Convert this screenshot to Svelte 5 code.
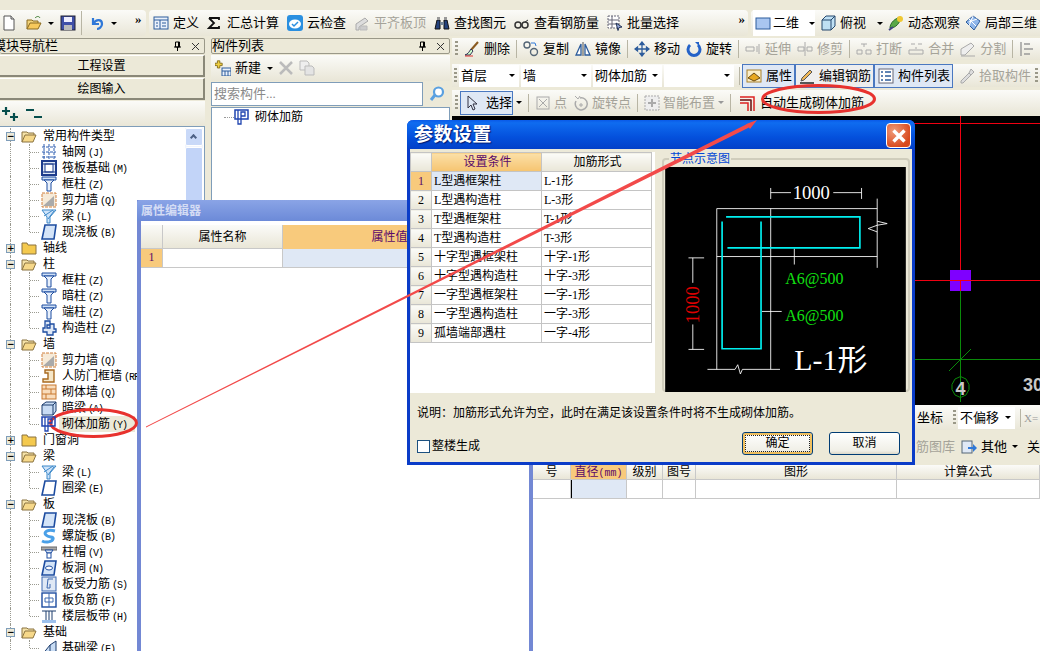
<script>
  const icons = {
    doc: '<path d="M3 1h7l3 3v11H3z" fill="#fff" stroke="#555"/><path d="M10 1v3h3" fill="#ddd" stroke="#555"/>',
    open: '<path d="M1 14V5h5l1 1h5v2" fill="#f2d37a" stroke="#8a6a20"/><path d="M1 14l3-6h11l-3 6z" fill="#f7c95c" stroke="#8a6a20"/><path d="M9 3c2-2 4-2 5 0" fill="none" stroke="#3a7a30"/>',
    save: '<rect x="1" y="1" width="14" height="14" fill="#3f4fa8" stroke="#223"/><rect x="4" y="2" width="8" height="5" fill="#eef"/><rect x="4" y="10" width="8" height="5" fill="#bbb"/>',
    undo: '<path d="M4 3v6h6M4.500 8.500C7 4 13 4 13 9c0 3-3 5-5 5" fill="none" stroke="#2f78d8" stroke-width="2.200"/>',
    define: '<rect x="1" y="2" width="14" height="12" fill="#eaf1fb" stroke="#2d5c9c"/><path d="M1 5h14M7 5v9M9 8h4M9 11h4M3 8h2M3 11h2" stroke="#2d5c9c"/>',
    sigma: '<path d="M2 3h10v2M12 13H2l5-5-5-5M2 13h10v-2" fill="none" stroke="#111" stroke-width="1.800"/>',
    cloud: '<rect x="0" y="0" width="16" height="16" rx="3" fill="#2a8fe0"/><ellipse cx="8" cy="9" rx="6" ry="4.500" fill="#fff"/><path d="M5 9l2 2 4-4" fill="none" stroke="#2a8fe0" stroke-width="1.500"/>',
    flat: '<path d="M2 9l9-6 3 3-9 6v3H2z" fill="#ddd" stroke="#aaa"/><path d="M6 11h7v4H6z" fill="#ccc" stroke="#bbb"/>',
    binoc: '<path d="M1 14l2-9h3v9zM10 14V5h3l2 9z" fill="#24427c" stroke="#111"/><path d="M6 7h4v3H6z" fill="#789"/><rect x="3" y="2" width="3" height="3" fill="#999"/><rect x="10" y="2" width="3" height="3" fill="#999"/>',
    glass: '<circle cx="4" cy="10" r="3" fill="none" stroke="#333" stroke-width="1.500"/><circle cx="11" cy="10" r="3" fill="none" stroke="#333" stroke-width="1.500"/><path d="M7 10h1M11 7l3-2" stroke="#333"/>',
    batch: '<rect x="1" y="1" width="11" height="12" fill="#fff" stroke="#667" stroke-dasharray="2 1"/><path d="M1 5h11M1 9h11M5 1v12" stroke="#667"/><path d="M9 8l6 4-3 .5-1 3z" fill="#9ad" stroke="#235"/>',
    view2d: '<rect x="1" y="3" width="14" height="11" fill="#a9c6f0" stroke="#2d5c9c"/>',
    box: '<path d="M2 5l4-4h9v10l-4 4H2z" fill="#bfe0f4" stroke="#24466c"/><path d="M2 5h9v10M11 5l4-4" fill="none" stroke="#24466c"/>',
    orbit: '<path d="M2 13c0-5 5-10 11-11-1 6-5 11-11 11z" fill="#5aa848" stroke="#2b6a28"/><circle cx="12" cy="4" r="3" fill="#f0c832"/><path d="M1 15l4-3" stroke="#448" stroke-width="2"/>',
    part3d: '<path d="M1 7l7-6 7 5-6 9z" fill="#8fb6ea" stroke="#2d5c9c"/><path d="M4 4l7 7M8 1l-4 10M12 4l-8 3" stroke="#fff"/>',
    broom: '<path d="M14 1L7 9" stroke="#8a5a20" stroke-width="2"/><path d="M7 8l2 2-3 4H1c3-1 4-3 6-6z" fill="#cfc" stroke="#335"/><path d="M1 15h8" stroke="#d33"/>',
    copy: '<circle cx="4" cy="4" r="3" fill="none" stroke="#567" stroke-width="1.400"/><circle cx="11" cy="11" r="3.500" fill="none" stroke="#567" stroke-width="1.400"/><path d="M8 2h4l1 3" fill="none" stroke="#2f78d8"/>',
    mirror: '<path d="M8 1v14" stroke="#555"/><path d="M6 3v11H1zM10 3v11h5z" fill="#fff" stroke="#2d5c9c" stroke-width="1.300"/>',
    move: '<path d="M8 1v14M1 8h14M8 1L6 3.500h4zM8 15l-2-2.500h4zM1 8l2.500-2v4zM15 8l-2.500-2v4z" fill="#2d5c9c" stroke="#2d5c9c" stroke-width="1.300"/>',
    rotate: '<path d="M4 4a6 6 0 1 0 8 0" fill="none" stroke="#2462c8" stroke-width="3"/><path d="M9 1h4v4z" fill="#2462c8"/>',
    extend: '<path d="M1 6h8v4H1zM12 5v6M14 3v10" fill="none" stroke="#aaa"/>',
    trim: '<path d="M1 6h6v4H1zM10 6h5v4h-5zM8 1v14" fill="none" stroke="#aaa"/>',
    brk: '<path d="M1 9h5v4H1zM10 9h5v4h-5zM5 3h6M8 3v3" fill="none" stroke="#aaa"/>',
    merge: '<path d="M1 9h14v4H1zM3 3h4M10 3h4M8 6v2" fill="none" stroke="#aaa"/>',
    split: '<path d="M1 14V8l10-6 3 3-9 9z" fill="#eee" stroke="#aaa"/><path d="M1 15h14" stroke="#aaa"/>',
    leftbar: '<path d="M2 1v14M5 3h6M5 8h9M5 13h6" fill="none" stroke="#999" stroke-width="1.400"/>',
    attr: '<rect x="1" y="2" width="14" height="12" fill="#fbeec8" stroke="#a8802c"/><path d="M2 10l6-5 6 5-6 3z" fill="#e8a820" stroke="#6a4a10"/>',
    pencil: '<path d="M3 10l8-8 2 2-8 8-3 1z" fill="#f0b858" stroke="#555"/><path d="M1 15h14" stroke="#222" stroke-width="1.500"/>',
    list: '<rect x="1" y="1" width="14" height="14" fill="#fff" stroke="#667"/><path d="M3 4h2M3 8h2M3 12h2M7 4h6M7 8h6M7 12h6" stroke="#2d5c9c" stroke-width="1.500"/>',
    pick: '<path d="M12 1l3 3-3 3-2-2zM10 5L2 13v2h2l8-8" fill="#ddd" stroke="#aaa"/>',
    arrow: '<path d="M4 1v12l3-3 2 5 2-1-2-5h4z" fill="#dfe8f5" stroke="#334"/>',
    point: '<rect x="2" y="2" width="12" height="12" fill="none" stroke="#aaa"/><path d="M4 4l8 8M12 4l-8 8" stroke="#aaa"/>',
    rotpt: '<path d="M3 6a6 6 0 1 0 4-3" fill="none" stroke="#aaa" stroke-width="1.500"/><path d="M8 8v4M6 10h4M2 1l3 3 2-3" stroke="#aaa" fill="none"/>',
    smart: '<rect x="1" y="1" width="14" height="14" fill="#eee" stroke="#aaa" stroke-dasharray="2 1"/><path d="M8 4v8M4 8h8" stroke="#aaa" stroke-width="2"/>',
    auto: '<path d="M1 2h14v14M1 5h11v11M1 8h8v8" fill="none" stroke="#d22" stroke-width="1.500"/><path d="M1 5h11v11" fill="none" stroke="#333"/>',
    other: '<rect x="1" y="2" width="10" height="12" fill="#dfe8f5" stroke="#567"/><path d="M7 8h5V5l4 4-4 4v-3H7z" fill="#2f78d8"/>',
    newitem: '<path d="M3 1h3v3h3v3H6v3H3V7H0V4h3z" fill="#f0d040" stroke="#776010" transform="scale(.8)"/><rect x="7" y="8" width="9" height="8" fill="#eaf1fb" stroke="#2d5c9c"/><path d="M7 11h9M10 11v5M13 11v5" stroke="#2d5c9c"/>',
    del: '<path d="M2 2l12 12M14 2L2 14" stroke="#bbb" stroke-width="2.500"/>',
    dup: '<path d="M1 1h7l2 2v7H1z" fill="#eee" stroke="#bbb"/><path d="M6 6h7l2 2v7H6z" fill="#e4e4e4" stroke="#bbb"/>',
    search: '<circle cx="9.500" cy="6" r="4.500" fill="#fff" stroke="#5aa0e0" stroke-width="2.200"/><path d="M6 9l-4 5" stroke="#5aa0e0" stroke-width="3"/>',
    rebar: '<rect x="1" y="1" width="13" height="9" fill="none" stroke="#1f44b0" stroke-width="1.500"/><path d="M4 1v14h3V7M11 3h-4v4h4z" fill="none" stroke="#1f44b0" stroke-width="1.300"/>',
    grid: '<path d="M1 3h14M1 8h14M1 13h14M3 0v16M8 0v16M13 0v16" stroke="#2d5cb0" stroke-dasharray="3 1"/>',
    raft: '<rect x="1" y="1" width="14" height="14" fill="#dfe8f5" stroke="#1d3c8c" stroke-width="2"/><rect x="4" y="4" width="8" height="8" fill="#fff" stroke="#1d3c8c"/><path d="M1 4h14M1 12h14" stroke="#1d3c8c"/>',
    col: '<path d="M1 1h14v3H1z" fill="#cfe0f6" stroke="#1d4ca0"/><path d="M3 4l3 3v8h4V7l3-3z" fill="#e8f0fb" stroke="#1d4ca0"/>',
    shear: '<rect x="1" y="1" width="14" height="14" fill="#f6ead8" stroke="#d08040" stroke-dasharray="3 1"/><path d="M2 14L13 4v10z" fill="#aaa"/>',
    beam: '<path d="M1 2h14L9 9v6H6V9z" fill="#cfe4fa" stroke="#3c88c8"/><path d="M3 8l9-6M7 11l6-8" stroke="#3c88c8"/>',
    slab: '<path d="M4 1h11l-2 14H1z" fill="#d4e4f8" stroke="#1d4ca0" stroke-width="1.600"/>',
    slab2: '<path d="M4 1h11l-2 14H1z" fill="#fff" stroke="#1d4ca0" stroke-width="1.600"/>',
    gz: '<path d="M4 1h5v3h4v5h2v3h-3v3H6v-3H2V8h2zM6 5h3v3H6z" fill="#dfe8f5" stroke="#1d4ca0" stroke-width="1.300"/>',
    door: '<path d="M4 2h9v12H2v-3h5V5H4z" fill="#f5e6c8" stroke="#a86a20" stroke-width="1.400"/>',
    brick: '<rect x="1" y="1" width="14" height="14" fill="#f8dcbc" stroke="#c87830"/><path d="M1 5h14M1 10h14M5 1v4M10 5v5M5 10v5" stroke="#c87830"/>',
    dbeam: '<path d="M1 5l4-3h10v9l-3 4H1z" fill="#c8dcf4" stroke="#1d3c6c"/><path d="M1 5h11v10M12 5l3-3" fill="none" stroke="#1d3c6c"/>',
    spiral: '<path d="M14 3C7 1 2 4 5 7s8 1 7 4-7 4-11 2" fill="none" stroke="#4aa0e8" stroke-width="3"/>',
    cap: '<path d="M0 3h16v3H0z" fill="#aaa" stroke="#666"/><path d="M4 6h8l-2 3H6z" fill="#dfe8f5" stroke="#1d4ca0"/><rect x="6" y="9" width="4" height="5" fill="#fff" stroke="#1d4ca0"/>',
    hole: '<path d="M4 1h11l-2 14H1z" fill="#d4e4f8" stroke="#1d4ca0" stroke-width="1.600"/><ellipse cx="8" cy="8" rx="3.500" ry="2" fill="#fff" stroke="#1d4ca0"/>',
    sbar: '<rect x="1" y="1" width="14" height="14" fill="#dfe8f5" stroke="#3c68b0"/><path d="M12 3H7l-1 9h3V8" fill="none" stroke="#3c68b0"/>',
    neg: '<rect x="1" y="1" width="14" height="14" fill="#fff" stroke="#1d4ca0" stroke-width="1.400"/><path d="M8 1v14M4 6v4h8V6z" fill="none" stroke="#3c68b0"/>',
    band: '<path d="M1 3h14M1 14h14M5 3v11M8 3v11M11 3v11" stroke="#1d3c6c"/><path d="M1 12h14v3H1z" fill="#9cc0ec"/>',
    fbeam: '<path d="M1 15L9 5l6-4v10l-6 4z" fill="#c8dcf4" stroke="#1d3c6c"/><path d="M9 5v10" stroke="#1d3c6c"/>'
  }

  const topA = [
    ['define', '定义'], ['sigma', '汇总计算'], ['cloud', '云检查'], ['flat', '平齐板顶', true],
    ['binoc', '查找图元'], ['glass', '查看钢筋量'], ['batch', '批量选择']
  ]
  const editRow = [
    ['broom', '删除'], 0, ['copy', '复制'], ['mirror', '镜像'], 0, ['move', '移动'], ['rotate', '旋转'], 0,
    ['extend', '延伸', true], ['trim', '修剪', true], 0, ['brk', '打断', true], ['merge', '合并', true], ['split', '分割', true], 0,
    ['leftbar', '', true]
  ]
  const tree = [
    { name: '常用构件类型', open: true, kids: [['grid', '轴网', 'J'], ['raft', '筏板基础', 'M'], ['col', '框柱', 'Z'], ['shear', '剪力墙', 'Q'], ['beam', '梁', 'L'], ['slab', '现浇板', 'B']] },
    { name: '轴线' },
    { name: '柱', open: true, kids: [['col', '框柱', 'Z'], ['col', '暗柱', 'Z'], ['col', '端柱', 'Z'], ['gz', '构造柱', 'Z']] },
    { name: '墙', open: true, kids: [['shear', '剪力墙', 'Q'], ['door', '人防门框墙', 'RF'], ['brick', '砌体墙', 'Q'], ['dbeam', '暗梁', 'A'], ['rebar', '砌体加筋', 'Y', true]] },
    { name: '门窗洞' },
    { name: '梁', open: true, kids: [['beam', '梁', 'L'], ['slab2', '圈梁', 'E']] },
    { name: '板', open: true, kids: [['slab', '现浇板', 'B'], ['spiral', '螺旋板', 'B'], ['cap', '柱帽', 'V'], ['hole', '板洞', 'N'], ['sbar', '板受力筋', 'S'], ['neg', '板负筋', 'F'], ['band', '楼层板带', 'H']] },
    { name: '基础', open: true, kids: [['fbeam', '基础梁', 'F']] }
  ]
  const params = [
    ['L型遇框架柱', 'L-1形'], ['L型遇构造柱', 'L-3形'], ['T型遇框架柱', 'T-1形'], ['T型遇构造柱', 'T-3形'],
    ['十字型遇框架柱', '十字-1形'], ['十字型遇构造柱', '十字-3形'], ['一字型遇框架柱', '一字-1形'], ['一字型遇构造柱', '一字-3形'], ['孤墙端部遇柱', '一字-4形']
  ]
</script>

{#snippet ic(name)}
  <svg class="ic" viewBox="0 0 16 16">{@html icons[name]}</svg>
{/snippet}

{#snippet tool(item)}
  <span class="tool" class:off={item[2]}>{@render ic(item[0])}{#if item[1]}<span>{item[1]}</span>{/if}</span>
{/snippet}

{#snippet combo(text, width)}
  <span class="combo" style="width:{width}px"><span>{text}</span><i class="caret"></i></span>
{/snippet}

{#snippet paneBtns()}
  <svg class="pin" viewBox="0 0 9 10"><path d="M2.500 1h4v5h-4zM1 6h7M4.500 6v4M5.500 1v5" fill="none" stroke="#000"/></svg>
  <svg class="x" viewBox="0 0 9 9"><path d="M1 1l7 7M8 1l-7 7" stroke="#333"/></svg>
{/snippet}

<div class="screen">
  <div class="topbar">
    <div class="seg seg-a">
      {@render ic('doc')}
      <span class="ico-gap"></span>
      {@render ic('open')}<i class="caret"></i>
      {@render ic('save')}
      <i class="vsep"></i>
      {@render ic('undo')}<i class="caret"></i>
      <span class="more">»</span>
    </div>
    <div class="seg seg-b">
      {#each topA as item}{@render tool(item)}{/each}
      <span class="more push">»</span>
    </div>
    <div class="seg seg-c">
      <span class="white-btn">{@render ic('view2d')}<span>二维</span><i class="caret"></i></span>
      <span class="tool">{@render ic('box')}<span>俯视</span><i class="caret"></i></span>
      <span class="tool">{@render ic('orbit')}<span>动态观察</span></span>
      <span class="tool">{@render ic('part3d')}<span>局部三维</span></span>
    </div>
  </div>

  <div class="work">
    <aside class="nav">
      <header class="pane-head"><span class="cut">模块导航栏</span>{@render paneBtns()}</header>
      <button class="nav-btn">工程设置</button>
      <button class="nav-btn">绘图输入</button>
      <div class="expand">
        <svg width="42" height="18" viewBox="0 0 42 18"><path d="M5 2v8M1 6h8M13 8v8M9 12h8M25 5h8M33 12h8" stroke="#064e4c" stroke-width="2.200" fill="none"/></svg>
      </div>
      <div class="tree">
        <div class="scroll"><span class="up"></span><span class="thumb"></span></div>
        {#each tree as g}
          <div class="row group">
            <i class="box">{g.open ? '−' : '+'}</i>
            {#if g.open}
              <svg class="folder" viewBox="0 0 16 13"><path d="M1 12V2h5l1 1h6v2" fill="#f5e2a8" stroke="#8a7340"/><path d="M1 12l3-7h11l-3 7z" fill="#f6d88a" stroke="#8a7340"/></svg>
            {:else}
              <svg class="folder" viewBox="0 0 16 13"><path d="M1 12V1h5l1 2h8v9z" fill="#f4c94e" stroke="#8a7340"/></svg>
            {/if}
            <span class="label">{g.name}</span>
          </div>
          {#each g.kids ?? [] as k, i}
            <div class="row kid" class:last={i === g.kids.length - 1}>
              <span class="kid-ic">{@render ic(k[0])}</span>
              <span class="label" class:picked={k[3]}>{k[1]} <span class="key">({k[2]}{k[2] === 'RF' ? '' : ')'}</span></span>
            </div>
          {/each}
        {/each}
      </div>
    </aside>

    <section class="list">
      <header class="pane-head"><span>构件列表</span>{@render paneBtns()}</header>
      <div class="list-bar">
        <span class="tool">{@render ic('newitem')}<span>新建</span><i class="caret"></i></span>
        {@render ic('del')}
        {@render ic('dup')}
      </div>
      <div class="search"><span class="input">搜索构件...</span><span class="go">{@render ic('search')}</span></div>
      <div class="list-body">
        <div class="list-item"><i class="dots"></i>{@render ic('rebar')}<span>砌体加筋</span></div>
      </div>
    </section>

    <main class="right">
      <div class="bar bar-edit">
        <i class="grip"></i>
        {#each editRow as item}
          {#if item}{@render tool(item)}{:else}<i class="vsep"></i>{/if}
        {/each}
      </div>
      <div class="bar bar-combo">
        <i class="grip"></i>
        {@render combo('首层', 60)}
        {@render combo('墙', 70)}
        {@render combo('砌体加筋', 69)}
        {@render combo('', 70)}
        <i class="vsep"></i>
        <span class="toggle t1">{@render ic('attr')}<span>属性</span></span>
        <span class="toggle t2">{@render ic('pencil')}<span>编辑钢筋</span></span>
        <span class="toggle t3">{@render ic('list')}<span>构件列表</span></span>
        <span class="tool off pickup">{@render ic('pick')}<span>拾取构件</span></span>
        <i class="grip end"></i>
      </div>
      <div class="bar bar-draw">
        <i class="grip"></i>
        <span class="toggle sel">{@render ic('arrow')}<span>选择</span></span><i class="caret"></i>
        <i class="vsep"></i>
        <span class="tool off">{@render ic('point')}<span>点</span></span>
        <span class="tool off">{@render ic('rotpt')}<span>旋转点</span></span>
        <i class="vsep"></i>
        <span class="tool off">{@render ic('smart')}<span>智能布置</span><i class="caret soft"></i></span>
        <i class="vsep"></i>
        <span class="tool gen">{@render ic('auto')}<span>自动生成砌体加筋</span></span>
      </div>

      <div class="canvas">
        <svg viewBox="0 0 588 289" width="588" height="289">
          <path d="M0 7.500H588M508.500 0V164.500M0 164.500H588" stroke="#f00012" fill="none"/>
          <path d="M508.500 164V286M452 243.500H588M497 255l22-22" stroke="#0a8a0a" fill="none"/>
          <rect x="498" y="154" width="21" height="21" fill="#7f00ff"/>
          <path d="M508.500 164V175M498 164.500h21" stroke="#f00012" fill="none"/>
          <path d="M503 263l5.500-2.500 5.500 2.500 3 5.500v5l-3 5.500-5.500 2.500-5.500-2.500-3-5.500v-5z" fill="none" stroke="#0a8a0a"/>
          <text x="508.500" y="279" text-anchor="middle" class="cad-num">4</text>
          <text x="571" y="275" class="cad-num">30</text>
        </svg>
      </div>

      <div class="bar bar-coord">
        <span class="lab">坐标</span>
        <i class="grip"></i>
        {@render combo('不偏移', 57)}
        <i class="vsep"></i>
        <span class="xeq">X=</span><span class="xbox"></span>
      </div>
      <div class="bar bar-lib">
        <span class="off-txt">筋图库</span>
        <span class="tool">{@render ic('other')}<span>其他</span><i class="caret"></i></span>
        <span class="tool"><span>关闭</span></span>
      </div>
      <div class="steel">
        <div class="steel-row head">
          <span>号</span><span class="on">直径<small>(mm)</small></span><span>级别</span><span>图号</span><span>图形</span><span>计算公式</span>
        </div>
        <div class="steel-row"><span></span><span class="cur"></span><span></span><span></span><span></span><span></span></div>
      </div>
    </main>
  </div>

  <div class="win editor">
    <div class="win-title">属性编辑器</div>
    <div class="ed-row head"><span></span><span>属性名称</span><span class="on">属性值</span><span></span></div>
    <div class="ed-row"><span class="on num">1</span><span></span><span class="val"></span><span class="val"></span></div>
  </div>

  <div class="win dialog">
    <div class="dlg-title"><span>参数设置</span>
      <button class="close" aria-label="关闭"><svg viewBox="0 0 24 24" width="24" height="24"><path d="M6.500 6.500l11 11M17.500 6.500l-11 11" stroke="#fff" stroke-width="3.400"/></svg></button>
    </div>
    <div class="dlg-main">
      <div class="grid-box">
        <table>
          <thead><tr><th></th><th class="on">设置条件</th><th>加筋形式</th></tr></thead>
          <tbody>
            {#each params as p, i}
              <tr>
                <th class:on={i === 0}>{i + 1}</th>
                <td class:cur={i === 0}>{p[0]}</td>
                <td>{p[1]}</td>
              </tr>
            {/each}
          </tbody>
        </table>
      </div>
      <fieldset class="node">
        <legend>节点示意图</legend>
        <svg viewBox="30 152 723 676" width="241" height="225">
          <rect x="30" y="152" width="723" height="676" fill="#000"/>
          <g stroke="#fff" stroke-width="2.600" fill="none">
            <path d="M347 215v33M620 215v33M347 229h61M535 229h85"/>
            <path d="M185 277H667M185 421H667M185 277V760M347 277V760M157 760H240l8-14 8 28 6-14H375"/>
            <path d="M667 247V455M667 315l30 7-30 5-27 10 27 10M418 397v48"/>
            <path d="M113 425v75M113 625v75M100 425h47M100 700h47M320 586h60"/>
          </g>
          <g stroke="#00f0f0" stroke-width="5" fill="none">
            <path d="M213 302H615V395H217"/>
            <path d="M201 316V698H318V316"/>
          </g>
          <text x="413" y="247" class="cad w">1000</text>
          <text x="0" y="0" class="cad r" transform="translate(132 622) rotate(-90)">1000</text>
          <text x="391" y="505" class="cad g">A6@500</text>
          <text x="391" y="616" class="cad g">A6@500</text>
          <text x="418" y="762" class="cad big">L-1形</text>
        </svg>
      </fieldset>
    </div>
    <p class="note">说明：加筋形式允许为空，此时在满足该设置条件时将不生成砌体加筋。</p>
    <div class="dlg-foot">
      <label class="check"><i></i><span>整楼生成</span></label>
      <button class="btn focus">确定</button>
      <button class="btn">取消</button>
    </div>
  </div>

  <svg class="ink" viewBox="0 0 1040 651" width="1040" height="651">
    <polygon points="146,426.500 747,124 745,124.500 757,120 750,129 749,127.500 146,427.500" fill="#f24a4a"/>
    <ellipse cx="93.500" cy="423" rx="43" ry="13.500" fill="none" stroke="#e8322e" stroke-width="3"/>
    <ellipse cx="818.500" cy="99" rx="56" ry="13.500" fill="none" stroke="#e8322e" stroke-width="3"/>
  </svg>
</div>

<style>
  :global(body) {
    margin: 0;
    background: #ece9d8;
  }
  .screen {
    position: relative;
    width: 1040px;
    height: 651px;
    overflow: hidden;
    background: #ece9d8;
    font-family: "Liberation Serif", "Noto Sans CJK SC", sans-serif;
    font-size: 13px;
    color: #000;
    line-height: 16px;
  }
  .ic {
    width: 16px;
    height: 16px;
    flex: none;
    display: block;
  }
  .caret {
    display: inline-block;
    width: 0;
    height: 0;
    border: 3px solid transparent;
    border-top: 3px solid #000;
    border-bottom: 0;
    flex: none;
  }
  .caret.soft {
    border-top-color: #999;
  }
  .vsep {
    width: 1px;
    height: 18px;
    background: #b8b5a4;
    flex: none;
  }

  .topbar {
    display: flex;
    height: 26px;
    margin-top: 10px;
    gap: 3px;
  }
  .seg {
    display: flex;
    align-items: center;
    background: linear-gradient(#fbfbf8, #e9e6d7);
    border-radius: 0 4px 4px 0;
    height: 26px;
  }
  .seg-a {
    width: 146px;
    flex: none;
    gap: 0;
    padding-left: 1px;
    box-sizing: border-box;
  }
  .ico-gap {
    width: 9px;
  }
  .seg-a .caret {
    margin: 0 6px;
  }
  .seg-a .vsep {
    margin: 0 7px 0 5px;
    height: 24px;
  }
  .more {
    font-size: 13px;
    line-height: 10px;
    margin: -8px 0 0 12px;
    font-weight: bold;
  }
  .more.push {
    margin-left: auto;
    margin-right: 3px;
  }
  .seg-b {
    width: 599px;
    flex: none;
    padding-left: 4px;
    box-sizing: border-box;
    gap: 8px;
    border-radius: 4px;
  }
  .seg-c {
    flex: 1;
    gap: 5px;
    padding-left: 2px;
    border-radius: 4px 0 0 4px;
  }
  .white-btn {
    display: flex;
    align-items: center;
    gap: 2px;
    width: 62px;
    height: 26px;
    background: #fff;
    padding-left: 2px;
    box-sizing: border-box;
  }
  .white-btn .caret {
    margin-left: 8px;
  }
  .seg-c .tool .caret {
    margin-left: 7px;
  }
  .tool {
    display: inline-flex;
    align-items: center;
    gap: 4px;
    white-space: nowrap;
    flex: none;
  }
  .tool.off,
  .off-txt {
    color: #a5a399;
  }

  .work {
    display: flex;
    height: 613px;
    margin-top: 2px;
  }
  .nav {
    width: 205px;
    flex: none;
  }
  .pane-head {
    display: flex;
    align-items: center;
    height: 14px;
    border: 1px solid #9a9888;
    border-width: 1px 1px 1px 0;
    border-radius: 2px;
    line-height: 14px;
    overflow: hidden;
  }
  .cut {
    margin-left: -7px;
  }
  .pin {
    margin-left: auto;
    width: 9px;
    height: 10px;
    margin-right: 9px;
    flex: none;
  }
  .x {
    width: 9px;
    height: 9px;
    margin-right: 4px;
    flex: none;
  }
  .nav-btn {
    display: block;
    width: 100%;
    height: 22px;
    margin-top: 1px;
    padding: 0;
    font: inherit;
    font-size: 12px;
    background: #ece9d8;
    border: 1px solid #8a8878;
    border-width: 1px 2px 2px 0;
    border-color: #fff #8a8878 #8a8878 #fff;
  }
  .expand {
    height: 25px;
    padding: 4px 0 0 1px;
    box-sizing: border-box;
    background: linear-gradient(#fbfbf8, #e9e6d7);
    margin-top: 1px;
  }
  .tree {
    position: relative;
    height: 525px;
    overflow: hidden;
    background: #fff;
    border-top: 1px solid #7f9db9;
    border-right: 1px solid #7f9db9;
    padding-top: 1px;
    font-size: 12px;
  }
  .scroll {
    position: absolute;
    top: 1px;
    right: 1px;
    width: 18px;
    height: 100%;
    display: flex;
    flex-direction: column;
    gap: 1px;
    background: #f1f5fd;
  }
  .up {
    height: 18px;
    background: #c9d9f8;
    border: 1px solid #fff;
    border-radius: 2px;
    box-sizing: border-box;
    position: relative;
  }
  .up::after {
    content: "";
    position: absolute;
    left: 5px;
    top: 6px;
    width: 5px;
    height: 5px;
    border: solid #4d6185;
    border-width: 2px 0 0 2px;
    transform: rotate(45deg);
    box-sizing: border-box;
  }
  .thumb {
    height: 70px;
    background: #c2d4f8;
    border: 1px solid #fff;
    border-radius: 2px;
  }
  .row {
    position: relative;
    display: flex;
    align-items: center;
    height: 16px;
    white-space: nowrap;
  }
  .row::before {
    content: "";
    position: absolute;
    left: 10px;
    top: 0;
    bottom: 0;
    border-left: 1px dotted #9a9a90;
  }
  .group .box {
    position: relative;
    width: 9px;
    height: 9px;
    margin-left: 6px;
    border: 1px solid #7f9db9;
    background: #ece9d8;
    box-sizing: border-box;
    font: bold 9px/7px "DejaVu Sans", sans-serif;
    text-align: center;
    color: #000;
    z-index: 1;
  }
  .folder {
    width: 16px;
    height: 13px;
    margin-left: 6px;
    flex: none;
  }
  .group .label {
    margin-left: 6px;
  }
  .kid {
    background: repeating-linear-gradient(90deg, #9a9a90 0 1px, transparent 1px 2px) no-repeat 30px 8px / 10px 1px;
  }
  .kid::after {
    content: "";
    position: absolute;
    left: 29px;
    top: 0;
    height: 100%;
    width: 11px;
    border-left: 1px dotted #9a9a90;
  }
  .kid.last::after {
    height: 8px;
  }
  .kid-ic {
    margin-left: 41px;
    position: relative;
    z-index: 1;
  }
  .kid .label {
    margin-left: 5px;
    word-spacing: -1px;
  }
  .kid .label.picked {
    background: #ece9d8;
    margin-left: 2px;
    padding: 0 8px 0 3px;
  }
  .key {
    font: 10px "Liberation Mono", monospace;
    letter-spacing: -1px;
    color: #000;
  }

  .list {
    width: 239px;
    flex: none;
    margin-left: 6px;
  }
  .list .pane-head {
    border-width: 1px;
  }
  .list-bar {
    display: flex;
    align-items: center;
    gap: 5px;
    height: 26px;
    padding-left: 4px;
    background: linear-gradient(#fbfbf8, #e9e6d7);
    margin-top: 1px;
  }
  .list-bar .tool {
    gap: 4px;
  }
  .list-bar .caret {
    margin-left: 2px;
  }
  .search {
    display: flex;
    height: 24px;
    margin-top: 1px;
  }
  .input {
    width: 212px;
    height: 24px;
    box-sizing: border-box;
    background: #fff;
    border: 1px solid #7f9db9;
    padding: 3px 2px;
    color: #8a8a8a;
  }
  .go {
    flex: 1;
    display: flex;
    align-items: center;
    justify-content: center;
  }
  .list-body {
    height: 540px;
    background: #fff;
    border: 1px solid #7f9db9;
    margin-top: 1px;
  }
  .list-item {
    display: flex;
    align-items: center;
    height: 16px;
    margin-top: 1px;
    padding-left: 12px;
    gap: 5px;
    font-size: 12px;
  }
  .dots {
    width: 10px;
    margin-right: -5px;
    border-top: 1px dotted #999;
  }

  .right {
    width: 588px;
    flex: none;
    margin-left: 2px;
    display: flex;
    flex-direction: column;
  }
  .bar {
    display: flex;
    align-items: center;
    background: linear-gradient(#fbfbf8, #e9e6d7);
    flex: none;
  }
  .grip {
    width: 3px;
    height: 16px;
    flex: none;
    background: repeating-linear-gradient(#9a9888 0 2px, transparent 2px 4px);
  }
  .grip.end {
    margin-left: auto;
    margin-right: 2px;
  }
  .bar-edit {
    height: 22px;
    padding-left: 3px;
    gap: 6px;
    margin-bottom: 4px;
    overflow: hidden;
  }
  .bar-combo {
    height: 23px;
    padding-left: 2px;
    gap: 2px;
    margin-bottom: 3px;
  }
  .combo {
    display: flex;
    align-items: center;
    justify-content: space-between;
    box-sizing: border-box;
    height: 22px;
    background: #fff;
    padding: 0 4px 0 2px;
    flex: none;
    white-space: nowrap;
  }
  .bar-combo .vsep {
    margin: 0 3px;
  }
  .toggle {
    display: inline-flex;
    align-items: center;
    gap: 4px;
    box-sizing: border-box;
    height: 24px;
    background: #dfe8f5;
    border: 1px solid #4a78c0;
    padding: 0 2px 0 3px;
    flex: none;
    white-space: nowrap;
  }
  .t1 {
    width: 53px;
    margin-left: -3px;
  }
  .t2 {
    width: 79px;
    margin-left: -2px;
    background: #eee;
  }
  .t3 {
    width: 79px;
    margin-left: -2px;
  }
  .pickup {
    margin-left: 4px;
  }
  .bar-draw {
    height: 25px;
    padding-left: 3px;
    gap: 6px;
  }
  .sel {
    width: 53px;
    margin-left: -4px;
    gap: 6px;
  }
  .sel + .caret {
    margin-left: -3px;
  }
  .bar-draw .tool {
    gap: 3px;
  }
  .bar-draw .tool.gen {
    gap: 5px;
    margin-left: 2px;
  }
  .canvas {
    height: 289px;
    background: #000;
    flex: none;
    margin-top: 1px;
  }
  .canvas svg {
    display: block;
  }
  .cad-num {
    font: bold 18px "Liberation Sans", sans-serif;
    fill: #c8c8c8;
  }
  .bar-coord {
    height: 25px;
    padding-left: 465px;
    gap: 5px;
  }
  .lab {
    width: 26px;
    margin-right: 5px;
    flex: none;
    white-space: nowrap;
  }
  .bar-coord .grip {
    margin-right: -3px;
  }
  .xeq {
    color: #999;
    font-size: 11px;
    margin-left: -2px;
  }
  .xbox {
    flex: 1;
    height: 18px;
    background: #fff;
    border: 1px solid #999;
  }
  .bar-lib {
    height: 33px;
    padding-left: 464px;
    gap: 6px;
    background: #ece9d8;
  }
  .off-txt {
    width: 39px;
    flex: none;
    white-space: nowrap;
  }
  .bar-lib .caret {
    margin: 0 3px 0 1px;
  }
  .steel {
    margin: 2px 0 0 81px;
    flex: 1;
    background: #fff;
    font-size: 12px;
  }
  .steel-row {
    display: grid;
    grid-template-columns: 38px 56px 36px 33px 201px 1fr;
    height: 19px;
    border-bottom: 1px solid #c8c8c8;
    box-sizing: border-box;
  }
  .steel-row.head {
    height: 15px;
    line-height: 14px;
    background: linear-gradient(#fbfbf8, #e9e6d7);
    text-align: center;
  }
  .steel-row span {
    border-right: 1px solid #c8c8c8;
    white-space: nowrap;
  }
  .steel-row .on {
    background: #f8ca7c;
    color: #5a0a6a;
  }
  small {
    font: 10px "Liberation Mono", monospace;
  }
  .steel-row .cur {
    background: #dfe8f5;
    border-left: 1px solid #000;
  }

  .win {
    position: absolute;
    box-sizing: border-box;
  }
  .editor {
    left: 137px;
    top: 200px;
    width: 396px;
    height: 460px;
    background: #fff;
    border: solid #7388d4;
    border-width: 0 4px;
    font-size: 12px;
  }
  .win-title {
    height: 21px;
    margin: 0 -4px;
    padding-left: 4px;
    background: linear-gradient(#8aa4e6, #6c8ad8);
    color: #d4dcf4;
    font-weight: bold;
    line-height: 22px;
    border-radius: 3px 3px 0 0;
  }
  .ed-row {
    display: grid;
    grid-template-columns: 22px 120px 214px 1fr;
    height: 19px;
    border-bottom: 1px solid #c8c8c8;
    box-sizing: border-box;
  }
  .ed-row.head {
    height: 24px;
    margin-top: 4px;
    line-height: 24px;
    text-align: center;
    background: linear-gradient(#fbfbf8, #e9e6d7);
  }
  .ed-row span {
    border-right: 1px solid #c8c8c8;
  }
  .ed-row .on {
    background: #f8ca7c;
    color: #5a0a6a;
  }
  .ed-row .num {
    text-align: center;
  }
  .ed-row .val {
    background: #dfe8f5;
  }

  .dialog {
    left: 407px;
    top: 120px;
    width: 508px;
    height: 345px;
    background: #ece9d8;
    border: solid #0a3cc8;
    border-width: 0 3px 3px;
    border-radius: 6px 6px 0 0;
    font-size: 12px;
  }
  .dlg-title {
    display: flex;
    align-items: center;
    justify-content: space-between;
    height: 29px;
    margin: 0 -3px;
    padding: 0 4px 0 7px;
    background: linear-gradient(#0a5ae8 0, #0f6cf0 10%, #0450dc 60%, #0340c8 100%);
    border-radius: 6px 6px 0 0;
    color: #fff;
    font-size: 19px;
    font-weight: bold;
    letter-spacing: 0.400px;
    text-shadow: 1px 1px 1px #001a70;
  }
  .close {
    width: 25px;
    height: 25px;
    padding: 0;
    margin-top: 1px;
    border: 1px solid #fff;
    border-radius: 4px;
    background: radial-gradient(circle at 30% 30%, #f09a78, #d8481c 75%);
  }
  .close svg {
    display: block;
  }
  .dlg-main {
    display: flex;
    gap: 7px;
    padding-top: 3px;
  }
  .grid-box {
    width: 245px;
    height: 241px;
    background: #fff;
    flex: none;
    overflow: hidden;
  }
  table {
    border-collapse: collapse;
    table-layout: fixed;
    width: 242px;
  }
  th,
  td {
    height: 19px;
    padding: 0 0 0 2px;
    border: 1px solid #c4c4c4;
    box-sizing: border-box;
    font-weight: 400;
    text-align: left;
    white-space: nowrap;
    overflow: hidden;
    line-height: 16px;
  }
  th:first-child {
    width: 21px;
    padding: 0;
    text-align: center;
    background: linear-gradient(#fbfbf8, #e9e6d7);
  }
  thead th {
    text-align: center;
    background: linear-gradient(#fbfbf8, #e9e6d7);
  }
  th:nth-child(2) {
    width: 110px;
  }
  thead th.on {
    background: linear-gradient(#fbe0a8, #f6c470);
    color: #5a0a6a;
  }
  tbody th.on {
    background: #f8ca7c;
    color: #5a0a6a;
  }
  td.cur {
    background: #dfe8f5;
  }
  .node {
    margin: 2px 0 0;
    padding: 3px 2px 2px 1px;
    width: 247px;
    height: 238px;
    box-sizing: border-box;
    border: 2px solid #d0cdbc;
    border-radius: 4px;
    flex: none;
  }
  .node legend {
    color: #0046d5;
    padding: 0 1px;
    margin-left: 4px;
    line-height: 10px;
    height: 10px;
  }
  .node svg {
    display: block;
  }
  .cad {
    font-family: "Liberation Serif", "Noto Sans CJK SC", serif;
    font-size: 48px;
  }
  .cad.w {
    fill: #fff;
    font-size: 56px;
  }
  .cad.r {
    fill: #e00000;
    font-size: 56px;
  }
  .cad.g {
    fill: #12e012;
  }
  .cad.big {
    fill: #fff;
    font-size: 90px;
  }
  .note {
    margin: 12px 0 0 7px;
    line-height: 16px;
    white-space: nowrap;
  }
  .dlg-foot {
    display: flex;
    align-items: center;
    margin: 10px 0 0 7px;
    height: 24px;
  }
  .check {
    display: flex;
    align-items: center;
    gap: 2px;
    margin-top: 6px;
    margin-right: auto;
    font-size: 12px;
  }
  .check i {
    width: 13px;
    height: 13px;
    box-sizing: border-box;
    border: 1px solid #1c5180;
    background: #fff;
  }
  .btn {
    width: 71px;
    height: 23px;
    padding: 0;
    margin-left: 16px;
    font: inherit;
    font-size: 12px;
    border: 1px solid #003c74;
    border-radius: 3px;
    background: linear-gradient(#fff, #f0efe6 85%, #dcd8c8);
  }
  .btn:last-child {
    margin-right: 12px;
  }
  .btn.focus {
    box-shadow: inset 0 0 0 2px #f0c060;
    outline: 1px dotted #222;
    outline-offset: -4px;
  }
  .ink {
    position: absolute;
    left: 0;
    top: 0;
    pointer-events: none;
  }
</style>
